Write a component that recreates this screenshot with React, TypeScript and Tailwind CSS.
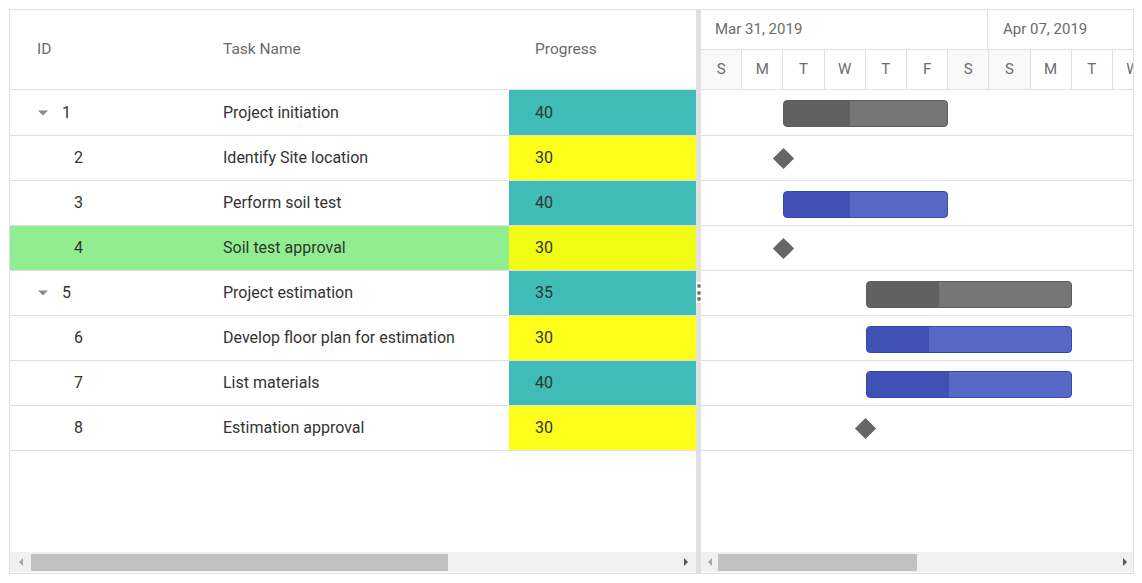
import React from 'react';

type Task = {
  id: number;
  name: string;
  progress: number;
  parent?: boolean;
  milestone?: boolean;
  start: number; // day index from Mar 31
  days: number;
};

const tasks: Task[] = [
  { id: 1, name: 'Project initiation', progress: 40, parent: true, start: 2, days: 4 },
  { id: 2, name: 'Identify Site location', progress: 30, milestone: true, start: 2, days: 0 },
  { id: 3, name: 'Perform soil test', progress: 40, start: 2, days: 4 },
  { id: 4, name: 'Soil test approval', progress: 30, milestone: true, start: 2, days: 0 },
  { id: 5, name: 'Project estimation', progress: 35, parent: true, start: 4, days: 5 },
  { id: 6, name: 'Develop floor plan for estimation', progress: 30, start: 4, days: 5 },
  { id: 7, name: 'List materials', progress: 40, start: 4, days: 5 },
  { id: 8, name: 'Estimation approval', progress: 30, milestone: true, start: 4, days: 0 },
];

const days = ['S', 'M', 'T', 'W', 'T', 'F', 'S', 'S', 'M', 'T', 'W'];
const DAY = 41.2;

function Arrow({ dir, dim }: { dir: 'left' | 'right'; dim?: boolean }) {
  return (
    <svg width="6" height="10" viewBox="0 0 6 10">
      {dir === 'left' ? (
        <polygon points="5,1 1,5 5,9" fill={dim ? '#a8a8a8' : '#555'} />
      ) : (
        <polygon points="1,1 5,5 1,9" fill={dim ? '#a8a8a8' : '#555'} />
      )}
    </svg>
  );
}

function ScrollBar({ btn, thumbWidth }: { btn: number; thumbWidth: number }) {
  return (
    <div className="h-[21px] flex items-start">
      <div className="h-[20px] w-full bg-[#f0f0f0] flex items-center">
        <div className="h-full flex items-center justify-center" style={{ width: btn }}>
          <Arrow dir="left" dim />
        </div>
        <div className="flex-1 h-full flex items-center">
          <div className="h-[17px] mt-[1px] bg-[#c1c1c1]" style={{ width: thumbWidth }} />
        </div>
        <div className="h-full flex items-center justify-center" style={{ width: btn }}>
          <Arrow dir="right" />
        </div>
      </div>
    </div>
  );
}

function Caret() {
  return (
    <svg width="12" height="6" viewBox="0 0 12 6" className="mr-[13px]">
      <polygon points="1,0.5 11,0.5 6,5.5" fill="#8a8a8a" />
    </svg>
  );
}

function GridPane() {
  return (
    <div className="w-[686px] flex flex-col">
      <div className="h-[80px] flex items-center border-b border-[#e0e0e0] text-[15.5px] text-[#6b6b6b]">
        <div className="w-[187px] pl-[27px]">ID</div>
        <div className="w-[312px] pl-[26px]">Task Name</div>
        <div className="w-[187px] pl-[26px]">Progress</div>
      </div>
      {tasks.map((t, i) => {
        const selected = t.id === 4;
        const teal = t.progress > 30;
        const progBg = teal ? 'bg-[#3fbcb6]' : selected ? 'bg-[#f0fd12]' : 'bg-[#fdfe1c]';
        return (
          <div
            key={t.id}
            className={`${i === 0 ? 'h-[46px]' : 'h-[45px]'} flex border-b border-[#e0e0e0] text-[16px] text-[#333] ${
              selected ? 'bg-[#90ee90]' : ''
            }`}
          >
            <div className={`w-[187px] flex items-center ${t.parent ? 'pl-[27px]' : 'pl-[64px]'}`}>
              {t.parent && <Caret />}
              {t.id}
            </div>
            <div className="w-[312px] flex items-center pl-[26px]">{t.name}</div>
            <div className={`w-[187px] flex items-center pl-[26px] ${progBg}`}>{t.progress}</div>
          </div>
        );
      })}
      <div className="flex-1" />
      <ScrollBar btn={21} thumbWidth={417} />
    </div>
  );
}

function Splitter() {
  return (
    <div className="w-[5px] bg-[#e0e0e0] relative">
      <div className="absolute left-0 top-[272px] bg-white w-[5px] py-[2px] flex flex-col items-center gap-[2.5px]">
        <div className="w-[4px] h-[4px] rounded-full bg-[#7a7a7a]" />
        <div className="w-[4px] h-[4px] rounded-full bg-[#7a7a7a]" />
        <div className="w-[4px] h-[4px] rounded-full bg-[#7a7a7a]" />
      </div>
    </div>
  );
}

function Bar({ t }: { t: Task }) {
  const left = t.start * DAY;
  if (t.milestone) {
    return (
      <div
        className="absolute top-[15px] w-[15px] h-[15px] bg-[#666] rotate-45"
        style={{ left: left - 7.5 }}
      />
    );
  }
  const width = t.days * DAY;
  const prog = (width * t.progress) / 100;
  const border = t.parent ? 'border-[#5c5c5c]' : 'border-[#3949ab]';
  const rest = t.parent ? 'bg-[#767676]' : 'bg-[#5868c6]';
  const done = t.parent ? 'bg-[#616161]' : 'bg-[#3f51b5]';
  return (
    <div
      className={`absolute top-[10px] h-[27px] rounded-[4px] border overflow-hidden ${border} ${rest}`}
      style={{ left, width }}
    >
      <div className={`h-full ${done}`} style={{ width: prog }} />
    </div>
  );
}

function ChartPane() {
  return (
    <div className="flex-1 flex flex-col overflow-hidden">
      <div className="h-[40px] flex border-b border-[#e0e0e0] text-[15px] text-[#6b6b6b] whitespace-nowrap">
        <div className="w-[287px] shrink-0 border-r border-[#e0e0e0] flex items-center pl-[14px]">Mar 31, 2019</div>
        <div className="w-[287px] shrink-0 flex items-center pl-[15px]">Apr 07, 2019</div>
      </div>
      <div className="h-[40px] flex border-b border-[#e0e0e0] text-[15px] text-[#6b6b6b]">
        {days.map((d, i) => (
          <div
            key={i}
            className={`w-[41.2px] shrink-0 border-r border-[#e0e0e0] flex items-center justify-center ${
              i === 0 || i === 6 || i === 7 ? 'bg-[#f9f9f9]' : 'bg-white'
            }`}
          >
            {d}
          </div>
        ))}
      </div>
      {tasks.map((t, i) => (
        <div
          key={t.id}
          className={`${i === 0 ? 'h-[46px] pt-[1px]' : 'h-[45px]'} border-b border-[#e0e0e0] relative`}
        >
          <Bar t={t} />
        </div>
      ))}
      <div className="flex-1" />
      <ScrollBar btn={17} thumbWidth={199} />
    </div>
  );
}

export default function App() {
  return (
    <div className="pt-[9px] pl-[9px] bg-white" style={{ fontFamily: 'Roboto, "Liberation Sans", sans-serif' }}>
      <div className="w-[1125px] h-[565px] border border-[#e0e0e0] flex">
        <GridPane />
        <Splitter />
        <ChartPane />
      </div>
    </div>
  );
}
